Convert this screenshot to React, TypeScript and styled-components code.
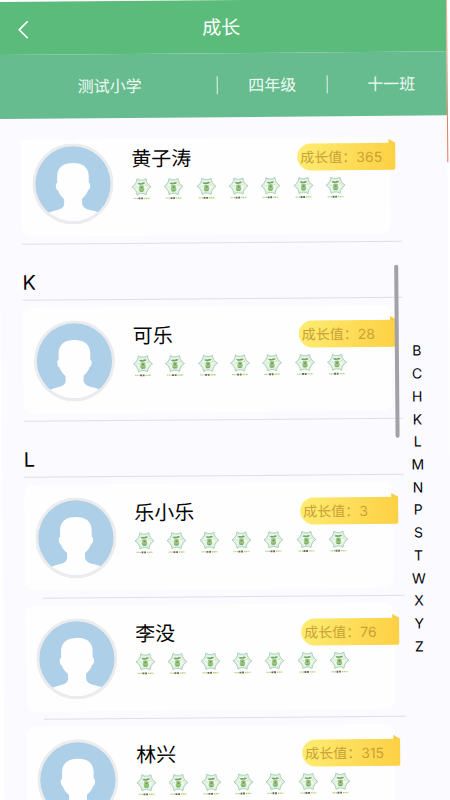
import React from "react";
import styled, { createGlobalStyle } from "styled-components";

const GlobalStyle = createGlobalStyle`
  *, *::before, *::after { box-sizing: border-box; }
  html, body { margin: 0; padding: 0; background: #fff; }
  body { font-family: Inter, "Noto Sans CJK SC", sans-serif; color: #050505; }
`;

const Viewport = styled.div`
  height: 100vh;
  overflow: hidden;
  background: #fff;
`;

const Screen = styled.div`
  position: relative;
  display: flex;
  flex-direction: column;
  width: calc(100% - 2px);
  height: calc(100vh + 8px);
  margin-left: -2px;
  padding-top: 2px;
  background: linear-gradient(#fff 2px, #fafaff 2px);
  transform: rotate(-0.47deg);
  transform-origin: 0 0;
`;

const EdgeGlow = styled.span`
  position: absolute;
  top: 0;
  right: -1px;
  width: 1px;
  height: 166px;
  background: linear-gradient(#f0b09c, #d98a6c 60%, #e2714f);
`;

const TitleBar = styled.header`
  display: grid;
  grid-template-columns: 48px 1fr 50px;
  align-items: center;
  flex: none;
  height: 53px;
  padding-top: 2px;
  background: #5bbb7a;
  color: #fff;
`;

const BackButton = styled.button`
  display: flex;
  align-items: center;
  justify-content: flex-end;
  height: 44px;
  padding: 0 17px 0 0;
  border: 0;
  background: none;
  color: inherit;
`;

const Title = styled.h1`
  margin: 0;
  font-size: 19px;
  font-weight: 400;
  line-height: 28px;
  text-align: center;
`;

const ClassBar = styled.div`
  display: grid;
  grid-template-columns: 218fr 110fr 120fr;
  align-items: center;
  flex: none;
  height: 64px;
  background: #66bb8f;
`;

const ClassItem = styled.span<{ $divided?: boolean; $inset?: number }>`
  height: 18px;
  padding-left: ${(p) => p.$inset ?? 0}px;
  border-left: ${(p) => (p.$divided ? "1px solid #e4f5ec" : "0")};
  color: #eefaf3;
  font-size: 16px;
  line-height: 18px;
  text-align: center;
`;

const Body = styled.div`
  display: grid;
  grid-template-columns: 1fr 46px;
  flex: 1;
  min-height: 0;
  padding: 21px 0 0 22px;
`;

const List = styled.main`
  position: relative;
  min-height: 0;
  overflow: hidden;
`;

const ListContent = styled.div`
  margin-top: -16px;
`;

const Heading = styled.h2`
  height: 56px;
  margin: 0;
  padding-top: 24px;
  border-bottom: 1px solid #dfdfe3;
  font-size: 20px;
  font-weight: 400;
  line-height: 28px;
`;

const Students = styled.ul`
  margin: 0;
  padding: 0;
  list-style: none;
`;

const Item = styled.li`
  padding: 7px 0;
  height: 121px;
  background: linear-gradient(#dfdfe3, #dfdfe3) 18px 100% / 100% 1px no-repeat;

  &:last-child {
    background-position: 0 100%;
  }
`;

const Card = styled.article`
  position: relative;
  display: flex;
  align-items: center;
  height: 106px;
  margin-right: 11px;
  padding-left: 11px;
  border-radius: 9px;
  background: #fefefe;
`;

const Info = styled.div`
  align-self: stretch;
  width: 214px;
  margin-left: 18px;
  padding-top: 14px;
`;

const Name = styled.h3`
  margin: 0 0 4px;
  font-size: 20px;
  font-weight: 400;
  line-height: 30px;
`;

const Medals = styled.div`
  display: flex;
  justify-content: space-between;
`;

const Growth = styled.p`
  position: absolute;
  top: 15px;
  right: -5px;
  width: 98px;
  height: 27px;
  margin: 0;
  padding-left: 3px;
  border-radius: 14px 0 2px 14px;
  background: linear-gradient(100deg, #fded72, #fedf5d 45%, #fdd043);
  color: #c9a136;
  font-size: 14px;
  line-height: 27px;
  white-space: nowrap;

  &::before {
    content: "";
    position: absolute;
    top: -4px;
    right: 0;
    width: 7px;
    height: 5px;
    background: #fbcf45;
    clip-path: polygon(0 0, 100% 80%, 100% 100%, 0 100%);
  }
`;

const ScrollThumb = styled.span`
  position: absolute;
  top: 128px;
  right: 4px;
  width: 4px;
  height: 173px;
  border-radius: 2px;
  background: #a1a1a6;
`;

const IndexNav = styled.nav`
  display: flex;
  flex-direction: column;
  width: 28px;
  height: 318px;
  margin-top: 203px;
`;

const IndexLink = styled.a`
  display: flex;
  flex: 1;
  align-items: center;
  justify-content: center;
  color: #050505;
  font-size: 14px;
  line-height: 20px;
  text-decoration: none;
`;

const Avatar = () => (
  <svg width="81" height="81" viewBox="-40.5 -40.5 81 81" aria-hidden="true">
    <defs>
      <clipPath id="face">
        <circle r="37.6" />
      </clipPath>
    </defs>
    <circle r="40.5" fill="#ececee" />
    <circle r="37.6" fill="#aecfe8" />
    <path
      clipPath="url(#face)"
      fill="#fefefe"
      d="M0-21C9.500-21 15.500-17 15.800-8V-1C18-1 17.500 5.500 15 6.500C14 10 11.500 13 9 15V20C9.500 24 14 26 18 26.500Q23 27.500 27 30L30 41H-30L-27 30Q-23 27.500-18 26.500C-14 26-9 24-9 20V15C-11.500 13-14 10-15 6.500C-17.500 5.500-18-1-15.800-1V-8C-15.500-17-9.500-21 0-21Z"
    />
  </svg>
);

const Medal = () => (
  <svg width="20" height="23" viewBox="0 0 20 23" aria-hidden="true">
    <path
      d="M5.500 0.900Q8 2.600 10 2.300Q12 2.600 14.500 0.900Q14.800 4.200 16 5.500Q17 7.500 19.500 9Q17 10.500 16 12.500Q14.800 13.800 14.500 17.100Q12 15.400 10 15.700Q8 15.400 5.500 17.100Q5.200 13.800 4 12.500Q3 10.500 0.500 9Q3 7.500 4 5.500Q5.200 4.200 5.500 0.900Z"
      fill="#dff1e2"
      stroke="#a3ccb4"
      strokeWidth="0.900"
      strokeLinejoin="round"
    />
    <ellipse cx="10" cy="9" rx="5.700" ry="5.500" fill="#f0f8f1" />
    <path
      d="M6 5.800Q7.500 4.200 9.800 5.300Q11.500 3.800 13.800 5.200Q12.500 6.900 10.300 6.600Q8 7.400 6 5.800Z"
      fill="#6dab63"
    />
    <path d="M4.300 8.300L7.200 8.800L6.500 10.300Z" fill="#cfe2bd" />
    <path d="M12.600 8L15.300 6L15 8.300Z" fill="#e8d9a0" />
    <path d="M7.500 8Q10 6.700 12.500 8L12 9.800H8Z" fill="#8fc283" />
    <ellipse cx="10" cy="11.600" rx="2.800" ry="2.400" fill="#93c77c" />
    <rect x="9" y="8.900" width="2.200" height="1.600" rx="0.800" fill="#a07a55" />
    <path d="M8.300 13.300H11.700" stroke="#69a565" strokeWidth="0.900" />
    <path d="M2 20.500H7" stroke="#bccb83" strokeWidth="1.300" strokeDasharray="1.200 .5" />
    <path d="M7 20.500H12" stroke="#65704b" strokeWidth="1.800" strokeDasharray="1.900 .7" />
    <path d="M12.500 20.500H18" stroke="#acd06a" strokeWidth="1.300" strokeDasharray="1.200 .5" />
  </svg>
);

interface Student {
  name: string;
  growth: number;
}

const groups: { letter?: string; students: Student[] }[] = [
  { students: [{ name: "黄子涛", growth: 365 }] },
  { letter: "K", students: [{ name: "可乐", growth: 28 }] },
  {
    letter: "L",
    students: [
      { name: "乐小乐", growth: 3 },
      { name: "李没", growth: 76 },
      { name: "林兴", growth: 315 },
    ],
  },
];

const letters = [..."BCHKLMNPSTWXYZ"];
const medals = Array.from({ length: 7 }, (_, i) => i);

const StudentRow = ({ name, growth }: Student) => (
  <Item>
    <Card>
      <Avatar />
      <Info>
        <Name>{name}</Name>
        <Medals>
          {medals.map((i) => (
            <Medal key={i} />
          ))}
        </Medals>
      </Info>
      <Growth>成长值：{growth}</Growth>
    </Card>
  </Item>
);

export default function App() {
  return (
    <>
      <GlobalStyle />
      <Viewport>
        <Screen>
          <EdgeGlow />
          <TitleBar>
            <BackButton aria-label="返回">
              <svg width="12" height="20" viewBox="0 0 12 20" fill="none" aria-hidden="true">
                <path d="M10.500 1.500L2 10L10.500 18.500" stroke="#fff" strokeWidth="1.700" />
              </svg>
            </BackButton>
            <Title>成长</Title>
          </TitleBar>
          <ClassBar>
            <ClassItem $inset={4}>测试小学</ClassItem>
            <ClassItem $divided>四年级</ClassItem>
            <ClassItem $divided $inset={8}>十一班</ClassItem>
          </ClassBar>
          <Body>
            <List>
              <ListContent>
                {groups.map((group, i) => (
                  <section key={i}>
                    {group.letter && <Heading id={group.letter}>{group.letter}</Heading>}
                    <Students>
                      {group.students.map((s) => (
                        <StudentRow key={s.name} {...s} />
                      ))}
                    </Students>
                  </section>
                ))}
              </ListContent>
              <ScrollThumb />
            </List>
            <IndexNav>
              {letters.map((l) => (
                <IndexLink key={l} href={`#${l}`}>
                  {l}
                </IndexLink>
              ))}
            </IndexNav>
          </Body>
        </Screen>
      </Viewport>
    </>
  );
}
